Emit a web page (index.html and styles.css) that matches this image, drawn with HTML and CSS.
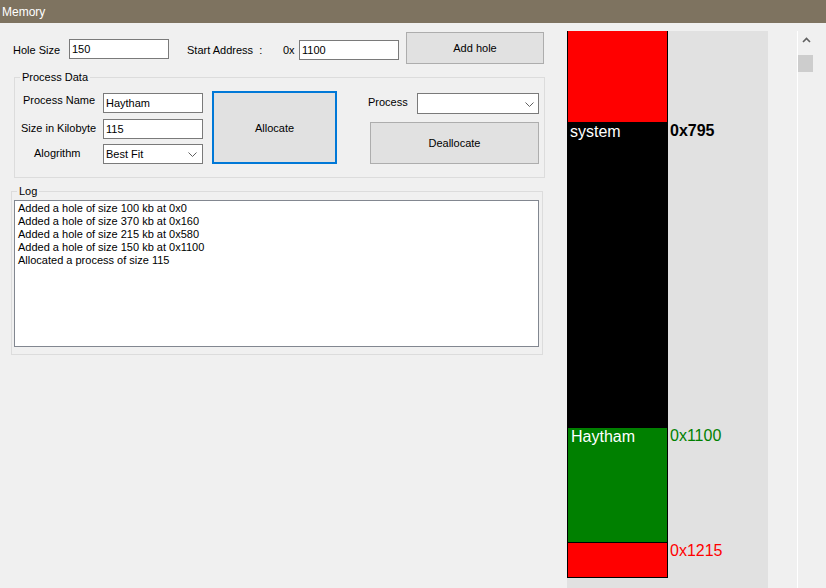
FILE: index.html
```html
<!DOCTYPE html>
<html>
<head>
<meta charset="utf-8">
<link rel="stylesheet" href="styles.css">
</head>
<body>
<div class="titlebar">Memory</div>
<div class="main">
  <div class="left">
    <div class="row1">
      <span class="lbl l-hole">Hole Size</span>
      <div class="input in-hole">150</div>
      <span class="lbl l-start">Start Address&nbsp; :</span>
      <span class="lbl l-ox">0x</span>
      <div class="input in-start">1100</div>
      <div class="btn addhole">Add hole</div>
    </div>
    <fieldset class="group pdata">
      <legend>Process Data</legend>
      <div class="pgrid">
        <div class="fields">
          <div class="frow r1"><span class="flbl fl-name">Process Name</span><div class="input">Haytham</div></div>
          <div class="frow r2"><span class="flbl fl-size">Size in Kilobyte</span><div class="input">115</div></div>
          <div class="frow r3"><span class="flbl fl-algo">Alogrithm</span><div class="combo algo">Best Fit<svg class="chev" width="9" height="5" viewBox="0 0 9 5"><polyline points="0.5,0.5 4.5,4.5 8.5,0.5" fill="none" stroke="#606060" stroke-width="1"/></svg></div></div>
        </div>
        <div class="btn allocate">Allocate</div>
        <div class="rightcol">
          <div class="prow"><span class="flbl fl-proc">Process</span><div class="combo proc"><svg class="chev" width="9" height="5" viewBox="0 0 9 5"><polyline points="0.5,0.5 4.5,4.5 8.5,0.5" fill="none" stroke="#606060" stroke-width="1"/></svg></div></div>
          <div class="btn dealloc">Deallocate</div>
        </div>
      </div>
    </fieldset>
    <fieldset class="group log">
      <legend>Log</legend>
      <div class="logbox">
        <div>Added a hole of size 100 kb at 0x0</div>
        <div>Added a hole of size 370 kb at 0x160</div>
        <div>Added a hole of size 215 kb at 0x580</div>
        <div>Added a hole of size 150 kb at 0x1100</div>
        <div>Allocated a process of size 115</div>
      </div>
    </fieldset>
  </div>
  <div class="memory">
    <div class="mrow h-red1"><div class="block red first"></div><span class="addr"></span></div>
    <div class="mrow h-sys"><div class="block black">system</div><span class="addr bold">0x795</span></div>
    <div class="mrow h-green"><div class="block green">Haytham</div><span class="addr c-green">0x1100</span></div>
    <div class="mrow h-red2"><div class="block red last"></div><span class="addr c-red">0x1215</span></div>
  </div>
  <div class="gap"></div>
  <div class="scroll">
    <svg class="up" width="9" height="6" viewBox="0 0 9 6"><polyline points="1,5 4.5,1.5 8,5" fill="none" stroke="#606060" stroke-width="1.6"/></svg>
    <div class="thumb"></div>
  </div>
</div>
</body>
</html>
```

FILE: styles.css
```css
html, body {
  margin: 0;
  padding: 0;
}
body {
  width: 826px;
  height: 588px;
  overflow: hidden;
  background: #f0f0f0;
  font-family: "Liberation Sans", Arial, sans-serif;
  font-size: 11px;
  line-height: 13px;
  color: #000;
}
.titlebar {
  height: 23px;
  box-sizing: border-box;
  padding: 5px 0 0 2px;
  background: #7e7360;
  color: #fff;
  font-size: 12px;
  line-height: 14px;
}
.main {
  display: flex;
  height: 565px;
}
.left {
  width: 567px;
  flex: none;
}
.row1 {
  display: flex;
  align-items: flex-start;
  height: 32px;
  margin-top: 9px;
  padding-left: 13px;
}
.lbl {
  margin-top: 12px;
  white-space: nowrap;
}
.l-hole { width: 56px; }
.l-start { width: 96px; margin-left: 18px; }
.l-ox { width: 16px; }
.input {
  width: 100px;
  height: 20px;
  box-sizing: border-box;
  border: 1px solid #7a7a7a;
  background: #fff;
  padding: 3px 2px 2px;
  white-space: nowrap;
}
.in-hole { margin-top: 7px; }
.in-start { margin-top: 8px; }
.btn {
  box-sizing: border-box;
  background: #e1e1e1;
  border: 1px solid #adadad;
  display: flex;
  align-items: center;
  justify-content: center;
}
.addhole {
  width: 138px;
  height: 32px;
  margin-left: 7px;
}
.group {
  margin: 0;
  padding: 0;
  border: 1px solid #dcdcdc;
  box-sizing: border-box;
}
.group legend {
  padding: 0 2px;
  margin-left: 5px;
  line-height: 13px;
}
.pdata {
  margin-top: 7px;
  margin-left: 14px;
  width: 531px;
  height: 107px;
}
.pgrid {
  display: flex;
  align-items: flex-start;
  padding-top: 7px;
}
.fields {
  display: flex;
  flex-direction: column;
  margin-top: 2px;
}
.frow {
  display: flex;
  align-items: flex-start;
}
.r2 { margin-top: 6px; }
.r3 { margin-top: 5px; }
.flbl {
  box-sizing: border-box;
  white-space: nowrap;
}
.fl-name { width: 88px; padding-left: 8px; margin-top: 1px; }
.fl-size { width: 88px; padding-left: 6px; margin-top: 3px; }
.fl-algo { width: 88px; padding-left: 19px; margin-top: 3px; }
.fl-proc { width: 49px; margin-top: 5px; }
.combo {
  position: relative;
  box-sizing: border-box;
  border: 1px solid #7a7a7a;
  background: #fff;
  padding: 3px 2px 2px;
}
.algo {
  width: 100px;
  height: 20px;
}
.proc {
  width: 122px;
  height: 21px;
  margin-top: 2px;
}
.chev {
  position: absolute;
  right: 5px;
  top: 7px;
}
.proc .chev { top: 8px; right: 4px; }
.allocate {
  width: 125px;
  height: 73px;
  margin-left: 9px;
  padding-top: 1px;
  border: 2px solid #0078d7;
}
.rightcol {
  display: flex;
  flex-direction: column;
}
.prow {
  display: flex;
  align-items: flex-start;
  margin-left: 31px;
}
.dealloc {
  width: 169px;
  height: 42px;
  margin-left: 33px;
  margin-top: 8px;
}
.log {
  margin-top: 7px;
  margin-left: 11px;
  width: 532px;
  height: 170px;
}
.logbox {
  width: 525px;
  height: 147px;
  box-sizing: border-box;
  margin-left: 2px;
  margin-top: 2px;
  border: 1px solid #828790;
  background: #fff;
  padding: 1px 3px;
  white-space: nowrap;
}
.memory {
  width: 201px;
  flex: none;
  margin-top: 8px;
  background: #e1e1e1;
  font-size: 16px;
  line-height: 18px;
}
.mrow {
  display: flex;
  align-items: flex-start;
}
.h-red1 { height: 91px; }
.h-sys { height: 305px; }
.h-green { height: 115px; }
.h-red2 { height: 36px; }
.block {
  width: 101px;
  height: 100%;
  box-sizing: border-box;
  border: 1px solid #000;
  border-bottom: none;
  padding-left: 2px;
  color: #fff;
  white-space: nowrap;
}
.block.first { border-top: none; }
.block.last { border-bottom: 1px solid #000; }
.green { padding-left: 3px; }
.red { background: #ff0000; }
.black { background: #000; }
.green { background: #008000; }
.addr {
  margin-left: 2px;
  white-space: nowrap;
}
.bold { font-weight: bold; color: #000; }
.c-green { color: #008000; }
.c-red { color: #ff0000; }
.gap {
  width: 29px;
  flex: none;
}
.scroll {
  flex: 1;
  margin-top: 8px;
  border-left: 1px solid #fff;
  display: flex;
  flex-direction: column;
}
.up {
  margin: 6px 0 0 4px;
}
.thumb {
  width: 15px;
  height: 17px;
  margin-top: 12px;
  background: #cdcdcd;
}
```
